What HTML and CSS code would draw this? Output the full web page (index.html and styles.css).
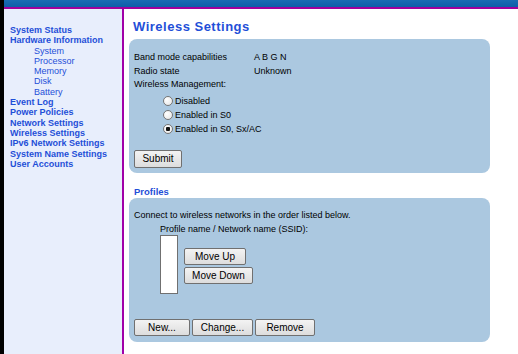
FILE: index.html
```html
<!DOCTYPE html>
<html lang="en">
<head>
  <meta charset="UTF-8" />
  <title>Wireless Settings</title>
  <link rel="stylesheet" href="styles.css">
</head>
<body>
  <div class="topbar"></div>
  <div class="page">
    <div class="sidebar">
      <a href="#">System Status</a>
      <a href="#">Hardware Information</a>
      <a href="#" class="sub">System</a>
      <a href="#" class="sub">Processor</a>
      <a href="#" class="sub">Memory</a>
      <a href="#" class="sub">Disk</a>
      <a href="#" class="sub">Battery</a>
      <a href="#">Event Log</a>
      <a href="#">Power Policies</a>
      <a href="#">Network Settings</a>
      <a href="#">Wireless Settings</a>
      <a href="#">IPv6 Network Settings</a>
      <a href="#">System Name Settings</a>
      <a href="#">User Accounts</a>
    </div>
    <div class="content">
      <h1>Wireless Settings</h1>
      <div class="panel">
        <div class="row"><span class="label">Band mode capabilities</span><span>A B G N</span></div>
        <div class="row"><span class="label">Radio state</span><span>Unknown</span></div>
        <div class="row">Wireless Management:</div>
        <div class="radios">
          <label><input type="radio" name="wm">Disabled</label>
          <label><input type="radio" name="wm">Enabled in S0</label>
          <label><input type="radio" name="wm" checked>Enabled in S0, Sx/AC</label>
        </div>
        <button class="btn submit">Submit</button>
      </div>

      <h2>Profiles</h2>
      <div class="panel profiles">
        <div class="intro">Connect to wireless networks in the order listed below.</div>
        <div class="list-label">Profile name / Network name (SSID):</div>
        <div class="list-area">
          <div class="listbox"></div>
          <div class="move">
            <button class="btn">Move Up</button>
            <button class="btn">Move Down</button>
          </div>
        </div>
        <div class="actions">
          <button class="btn">New...</button>
          <button class="btn">Change...</button>
          <button class="btn">Remove</button>
        </div>
      </div>
    </div>
  </div>
</body>
</html>
```

FILE: styles.css
```css
html, body {
  margin: 0;
  height: 100%;
}
body {
  font-family: 'Liberation Sans', Arial, sans-serif;
  font-size: 9px;
  color: #000;
  background: #fff;
  border-left: 4px solid #000;
  overflow: hidden;
}
.topbar {
  height: 7px;
  background: linear-gradient(#1a6cb4, #0e5ea8);
  border-bottom: 2px solid #a0009c;
}
.page {
  display: flex;
  height: calc(100% - 9px);
}
.sidebar {
  width: 120px;
  background: #e8eefc;
  border-right: 2px solid #a000a8;
  padding-top: 16px;
  box-sizing: border-box;
  display: flex;
  flex-direction: column;
}
.sidebar a {
  display: block;
  color: #1f4fd8;
  text-decoration: none;
  font-weight: bold;
  font-size: 9px;
  line-height: 10.3px;
  padding-left: 6px;
}
.sidebar a.sub {
  font-weight: normal;
  padding-left: 30px;
}
.content {
  flex: 1;
  padding: 0 28px 0 5px;
}
h1 {
  margin: 10px 0 4px 4px;
  font-size: 13px;
  letter-spacing: 0.5px;
  font-weight: bold;
  color: #1f4fd8;
  line-height: 16px;
}
h2 {
  margin: 13px 0 0 5px;
  font-size: 9.5px;
  font-weight: bold;
  color: #1f4fd8;
  line-height: 12px;
}
.panel {
  background: #abc8e0;
  border-radius: 8px;
  padding: 12px 5px 5px;
  height: 134px;
  box-sizing: border-box;
}
.row {
  display: flex;
  line-height: 13.5px;
}
.row .label {
  width: 120px;
}
.radios {
  display: flex;
  flex-direction: column;
  padding-left: 29px;
  margin-top: 2px;
}
.radios label {
  display: flex;
  align-items: center;
  height: 14px;
}
.radios input {
  appearance: none;
  width: 10px;
  height: 10px;
  margin: 0 2px 0 0;
  border: 1px solid #767676;
  border-radius: 50%;
  background: radial-gradient(circle at 35% 35%, #ffffff, #e4e4e4);
  box-sizing: border-box;
}
.radios input:checked {
  background: radial-gradient(circle, #111 0 2px, transparent 2.5px),
              radial-gradient(circle at 35% 35%, #ffffff, #e4e4e4);
}
.btn {
  font-family: 'Liberation Sans', Arial, sans-serif;
  font-size: 10px;
  color: #000;
  background: linear-gradient(#f3f3f3, #dddddd);
  border: 1px solid #707070;
  border-radius: 2px;
  padding: 0;
  height: 17px;
}
.submit {
  margin-top: 14px;
  width: 48px;
  height: 18px;
}
.profiles {
  height: 144px;
  padding: 11px 5px 6px;
  display: flex;
  flex-direction: column;
}
.intro {
  line-height: 12px;
}
.list-label {
  padding-left: 26px;
  margin-top: 2px;
  line-height: 12px;
}
.list-area {
  display: flex;
  padding-left: 26px;
  gap: 6px;
}
.listbox {
  width: 16px;
  height: 57px;
  background: #fff;
  border: 1px solid #707070;
}
.move {
  display: flex;
  flex-direction: column;
  align-items: flex-start;
  gap: 2px;
  padding-top: 13px;
}
.move .btn:first-child { width: 62px; }
.move .btn:last-child { width: 69px; }
.actions {
  margin-top: auto;
  display: flex;
  gap: 2px;
}
.actions .btn:nth-child(1) { width: 56px; }
.actions .btn:nth-child(2) { width: 61px; }
.actions .btn:nth-child(3) { width: 60px; }
```
